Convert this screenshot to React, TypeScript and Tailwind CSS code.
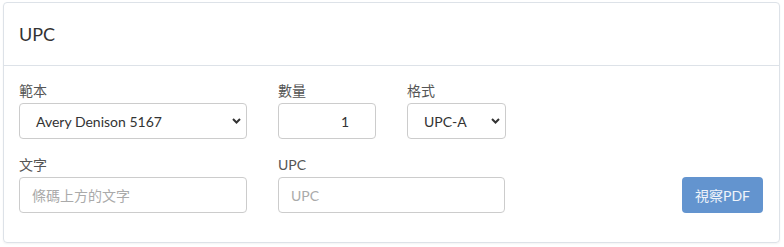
import type { ReactNode } from 'react';

const font = { fontFamily: 'Lato, "Noto Sans CJK TC", sans-serif' };

const Chevron = () => (
  <svg
    className="pointer-events-none absolute right-[5px] top-1/2 -translate-y-1/2"
    width="9"
    height="6"
    viewBox="0 0 9 6"
  >
    <polyline points="1,1 4.5,4.5 8,1" fill="none" stroke="#333" strokeWidth="2" />
  </svg>
);

const Field = ({ label, className, children }: { label: string; className: string; children: ReactNode }) => (
  <div className={className}>
    <div className="mb-[2px] text-[14px] leading-[20px] text-[#555]">{label}</div>
    {children}
  </div>
);

const SelectBox = ({ value }: { value: string }) => (
  <div className="relative h-[36px] rounded-[4px] border border-[#ccc] bg-white">
    <div className="flex h-full items-center pl-[16px] text-[14px] text-[#333]">{value}</div>
    <Chevron />
  </div>
);

export default function App() {
  return (
    <div className="h-[247px] w-[784px] bg-white pl-[3px] pt-[2px]" style={font}>
      <div className="h-[241px] w-[777px] rounded-[4px] border border-[#dde2e8] shadow-[0_1px_2px_rgba(0,0,0,0.05)]">
        <div className="flex h-[63px] items-center border-b border-[#dde2e8] px-[15px] text-[18px] text-[#333]">
          UPC
        </div>
        <div className="px-[15px] pt-[15px]">
          <div className="flex gap-[31px]">
            <Field label="範本" className="w-[228px]">
              <SelectBox value="Avery Denison 5167" />
            </Field>
            <Field label="數量" className="w-[98px]">
              <div className="flex h-[36px] items-center justify-end rounded-[4px] border border-[#ccc] bg-white pr-[26px] text-[14px] text-[#333]">
                1
              </div>
            </Field>
            <Field label="格式" className="w-[99px]">
              <SelectBox value="UPC-A" />
            </Field>
          </div>
          <div className="mt-[16px] flex items-end">
            <Field label="文字" className="w-[228px]">
              <input
                placeholder="條碼上方的文字"
                className="h-[36px] w-full rounded-[4px] border border-[#ccc] px-[12px] text-[14px] text-[#333] outline-none placeholder:text-[#aaa]"
              />
            </Field>
            <Field label="UPC" className="ml-[31px] w-[227px]">
              <input
                placeholder="UPC"
                className="h-[36px] w-full rounded-[4px] border border-[#ccc] px-[12px] text-[14px] text-[#333] outline-none placeholder:text-[#aaa]"
              />
            </Field>
            <button className="ml-auto mr-[1px] h-[36px] w-[81px] rounded-[4px] bg-[#6394cf] text-[14px] text-white/90">
              視察PDF
            </button>
          </div>
        </div>
      </div>
    </div>
  );
}
